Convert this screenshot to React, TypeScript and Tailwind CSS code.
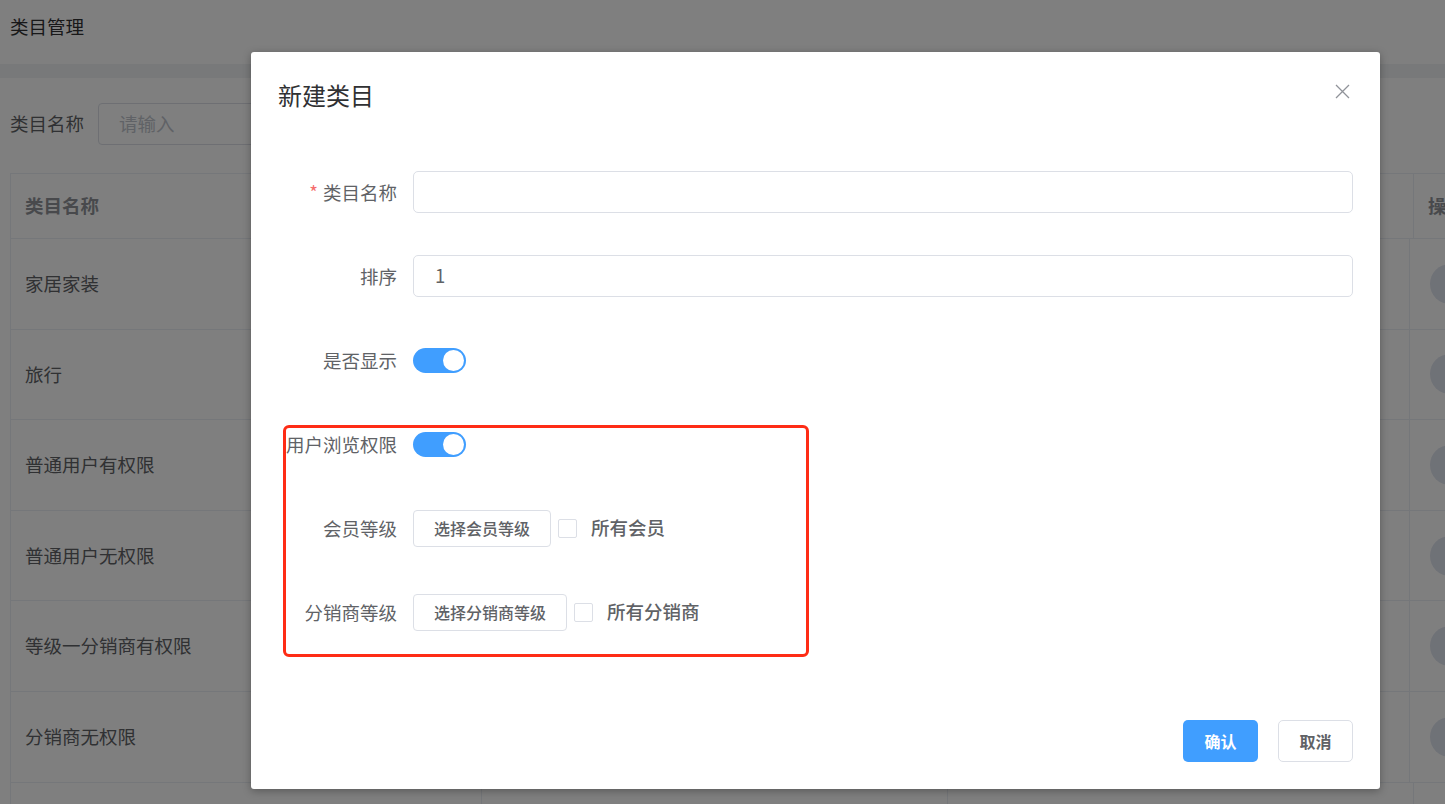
import React from "react";

const FONT = "font-['PingFang_SC','Noto_Sans_CJK_SC','Noto_Sans',sans-serif]";

const ROWS = ["家居家装", "旅行", "普通用户有权限", "普通用户无权限", "等级一分销商有权限", "分销商无权限", ""];

function Toggle() {
  return (
    <span className="flex h-[25px] w-[53px] items-center justify-end rounded-full bg-[#409eff] p-[2px]">
      <span className="h-[21px] w-[21px] rounded-full bg-white" />
    </span>
  );
}

function Row({ label, required, children }: { label: string; required?: boolean; children: React.ReactNode }) {
  return (
    <div className="flex h-[42px] items-center">
      <div className="w-[132px] shrink-0 whitespace-nowrap pr-[16px] text-right text-[18.5px] leading-[42px] text-[#606266]">
        {required && <span className="mr-[5px] text-[#f56c6c]">*</span>}
        {label}
      </div>
      <div className="flex flex-1 items-center pr-[27px]">{children}</div>
    </div>
  );
}

function Pick({ text, check }: { text: string; check: string }) {
  return (
    <div className="flex items-center">
      <button className="h-[37px] rounded-[4px] border border-[#dcdfe6] bg-white px-[20px] text-[16px] font-medium text-[#606266]">
        {text}
      </button>
      <span className="ml-[7px] h-[19px] w-[19px] rounded-[2px] border border-[#dcdfe6] bg-white" />
      <span className="ml-[14px] text-[18.5px] font-medium text-[#606266]">{check}</span>
    </div>
  );
}

export default function App() {
  return (
    <div className={`relative h-[804px] w-[1445px] overflow-hidden bg-[#f0f2f5] ${FONT}`}>
      {/* page behind */}
      <div className="h-[64px] bg-white px-[10px] pt-[12px] text-[18.5px] leading-[28px] text-[#303133]">类目管理</div>
      <div className="h-[14px]" />
      <div className="h-[726px] bg-white pt-[25px]">
        <div className="flex items-center px-[10px]">
          <span className="mr-[14px] text-[18.5px] text-[#606266]">类目名称</span>
          <div className="flex h-[42px] w-[300px] items-center rounded-[4px] border border-[#dcdfe6] px-[20px] text-[18.5px] text-[#c0c4cc]">
            请输入
          </div>
        </div>
        <div className="ml-[10px] mt-[28px] w-[1480px] border-l border-t border-[#ebeef5]">
          <div className="flex h-[65px] border-b border-[#ebeef5] text-[18.5px] font-semibold text-[#909399]">
            <div className="flex w-[471px] items-center border-r border-[#ebeef5] px-[14px]">类目名称</div>
            <div className="w-[466px] border-r border-[#ebeef5]" />
            <div className="w-[466px] border-r border-[#ebeef5]" />
            <div className="flex items-center px-[14px]">操作</div>
          </div>
          {ROWS.map((r, i) => (
            <div key={i} className="flex h-[90.6px] border-b border-[#ebeef5] text-[18.5px] text-[#606266]">
              <div className="flex w-[471px] items-center border-r border-[#ebeef5] px-[14px]">{r}</div>
              <div className="w-[466px] border-r border-[#ebeef5]" />
              <div className="w-[466px] border-r border-[#ebeef5]" />
              <div className="flex items-center px-[20px]">
                {r && <span className="h-[40px] w-[40px] rounded-full bg-[#dfe4ee]" />}
              </div>
            </div>
          ))}
        </div>
      </div>

      {/* mask */}
      <div className="absolute inset-0 bg-black/50" />

      {/* dialog */}
      <div className="absolute left-[251px] top-[52px] flex h-[737px] w-[1129px] flex-col rounded-[3px] bg-white shadow-[0_2px_8px_rgba(0,0,0,0.3)]">
        <div className="flex items-start justify-between pl-[27px] pr-[30px] pt-[26px]">
          <span className="text-[24px] leading-[34px] text-[#303133]">新建类目</span>
          <svg className="mt-[6px]" width="15" height="15" viewBox="0 0 15 15">
            <path d="M1 1L14 14M14 1L1 14" stroke="#909399" strokeWidth="1.3" />
          </svg>
        </div>

        <div className="mt-[59px] flex flex-col gap-[42px] pl-[30px]">
          <Row label="类目名称" required>
            <div className="h-[42px] w-full rounded-[5px] border border-[#dcdfe6]" />
          </Row>
          <Row label="排序">
            <div className="flex h-[42px] w-full items-center rounded-[5px] border border-[#dcdfe6] px-[21px] text-[18.5px] text-[#606266]">
              1
            </div>
          </Row>
          <Row label="是否显示">
            <Toggle />
          </Row>
          <Row label="用户浏览权限">
            <Toggle />
          </Row>
          <Row label="会员等级">
            <Pick text="选择会员等级" check="所有会员" />
          </Row>
          <Row label="分销商等级">
            <Pick text="选择分销商等级" check="所有分销商" />
          </Row>
        </div>

        <div className="mt-[87px] flex justify-end gap-[20px] pr-[27px]">
          <button className="h-[42px] w-[75px] rounded-[5px] bg-[#409eff] text-[16px] font-semibold text-white">确认</button>
          <button className="h-[42px] w-[75px] rounded-[5px] border border-[#dcdfe6] bg-white text-[16px] font-semibold text-[#606266]">
            取消
          </button>
        </div>

        {/* annotation */}
        <div className="pointer-events-none absolute left-[32px] top-[373px] h-[232px] w-[526px] rounded-[6px] border-[3px] border-[#fe2c15]" />
      </div>
    </div>
  );
}
